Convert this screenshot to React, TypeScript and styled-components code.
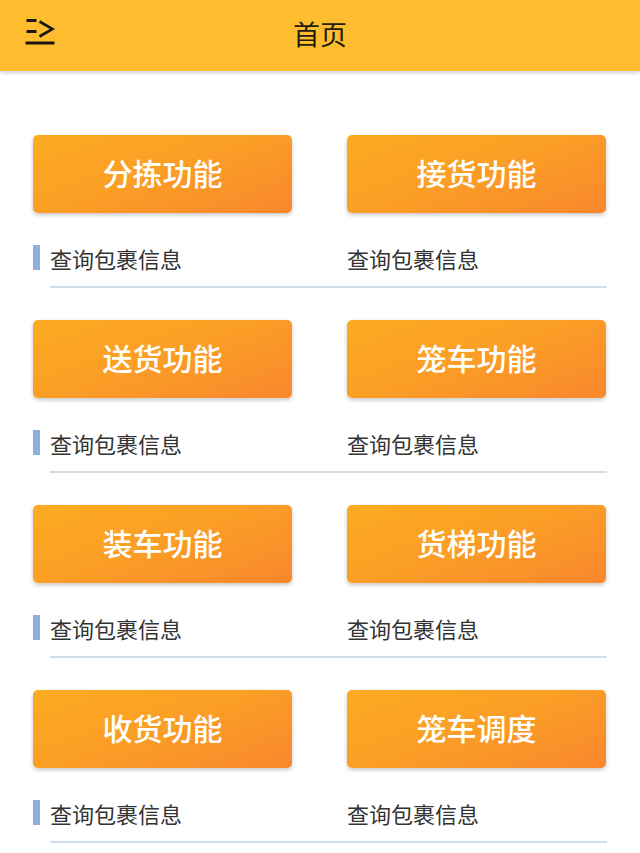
import styled, { createGlobalStyle } from "styled-components";

const GlobalStyle = createGlobalStyle`
  html, body {
    margin: 0;
    padding: 0;
    background: #fff;
    font-family: "Noto Sans CJK SC", "Noto Sans", sans-serif;
  }
`;

const Page = styled.div`
  width: 640px;
  min-height: 853px;
  background: #fff;
`;

const HeaderBar = styled.header`
  height: 71px;
  background-color: #febd2e;
  box-shadow: 0 2px 4px rgba(0, 0, 0, 0.18);
  display: flex;
  align-items: center;
  justify-content: center;
  position: relative;
`;

const MenuButton = styled.button`
  position: absolute;
  left: 24px;
  top: 16px;
  width: 34px;
  height: 34px;
  padding: 0;
  border: none;
  background: transparent;
  display: flex;
  align-items: center;
  justify-content: center;
`;

const Title = styled.h1`
  margin: 0 0 5px 0;
  font-size: 27px;
  font-weight: 400;
  color: #231c10;
`;

const Content = styled.main`
  padding: 64px 33px 0 33px;
  display: flex;
  flex-direction: column;
`;

const Block = styled.section`
  display: flex;
  flex-direction: column;
  margin-bottom: 32px;
`;

const ButtonRow = styled.div`
  display: grid;
  grid-template-columns: 259px 259px;
  column-gap: 55px;
`;

const FunctionButton = styled.button`
  height: 78px;
  border: none;
  border-radius: 5px;
  padding: 0 0 5px 0;
  background: linear-gradient(160deg, #fcab22 0%, #fb9f25 45%, #f9872d 100%);
  box-shadow: 0 2px 4px rgba(0, 0, 0, 0.22);
  color: #fff;
  font-family: "Noto Sans CJK SC", sans-serif;
  font-size: 30px;
  font-weight: 500;
  display: flex;
  align-items: center;
  justify-content: center;
`;

const InfoRow = styled.div`
  display: grid;
  grid-template-columns: 259px 259px;
  column-gap: 55px;
  margin-top: 32px;
`;

const InfoCell = styled.div<{ $marked?: boolean }>`
  display: flex;
  align-items: center;
  height: 25px;
  font-size: 22px;
  color: #333;

  &::before {
    content: "";
    display: ${(p) => (p.$marked ? "block" : "none")};
    width: 7px;
    height: 25px;
    background: #8fb0dc;
    margin-right: 10px;
  }
`;

const Divider = styled.hr`
  margin: 16px 0 0 17px;
  border: none;
  height: 2px;
  background: #d3dde9;
`;

const MenuIcon = () => (
  <svg width="34" height="34" viewBox="0 0 34 34" fill="none">
    <g stroke="#1c1710" strokeWidth="3">
      <line x1="2.5" y1="4.5" x2="12.5" y2="4.5" />
      <line x1="2.5" y1="15.5" x2="12.5" y2="15.5" />
      <polyline points="15.5,5.5 28.5,13 15.5,20.5" strokeWidth="2.6" />
      <line x1="1.5" y1="27" x2="30.5" y2="27" />
    </g>
  </svg>
);

const rows: [string, string][] = [
  ["分拣功能", "接货功能"],
  ["送货功能", "笼车功能"],
  ["装车功能", "货梯功能"],
  ["收货功能", "笼车调度"],
];

const App = () => {
  return (
    <>
      <GlobalStyle />
      <Page>
        <HeaderBar>
          <MenuButton aria-label="menu">
            <MenuIcon />
          </MenuButton>
          <Title>首页</Title>
        </HeaderBar>
        <Content>
          {rows.map(([left, right]) => (
            <Block key={left}>
              <ButtonRow>
                <FunctionButton>{left}</FunctionButton>
                <FunctionButton>{right}</FunctionButton>
              </ButtonRow>
              <InfoRow>
                <InfoCell $marked>查询包裹信息</InfoCell>
                <InfoCell>查询包裹信息</InfoCell>
              </InfoRow>
              <Divider />
            </Block>
          ))}
        </Content>
      </Page>
    </>
  );
};

export default App;
